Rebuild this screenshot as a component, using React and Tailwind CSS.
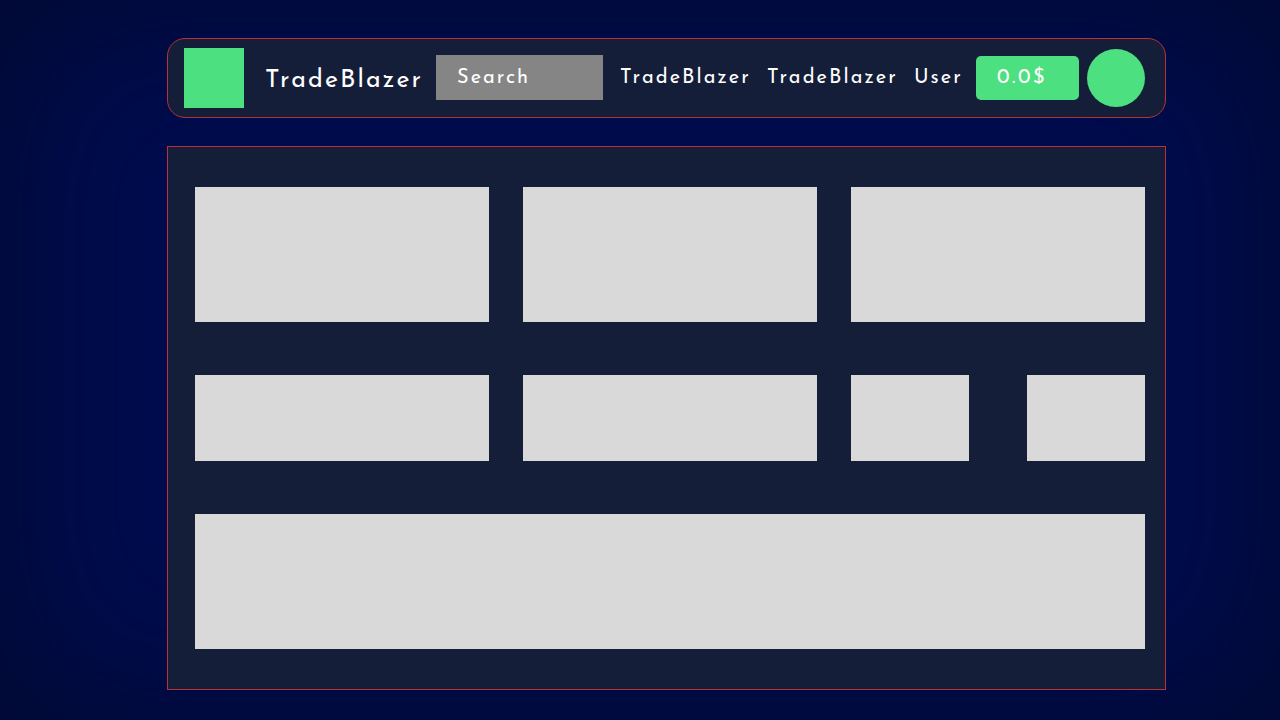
const links = ["TradeBlazer", "TradeBlazer", "User"];

function Header() {
  return (
    <header className="flex h-20 items-center rounded-[18px] border border-[#b93038] bg-[#151e38] pl-4 pr-5 tracking-[0.13em] text-white">
      <div className="size-[60px] shrink-0 bg-[#4ce080]" />
      <h1 className="w-[192px] shrink-0 pl-[21px] pt-1.5 text-[25px]">TradeBlazer</h1>
      <input
        type="search"
        aria-label="Search"
        placeholder="Search"
        className="mb-px h-[45px] w-[167px] min-w-0 rounded-none bg-[#858585] pl-[21px] text-xl tracking-widest text-white outline-none placeholder:text-white placeholder:opacity-100"
      />
      <nav className="flex flex-1 gap-4 pl-[17px] text-xl">
        {links.map((label, i) => (
          <a key={i} href="#">
            {label}
          </a>
        ))}
      </nav>
      <button
        type="button"
        className="h-11 w-[103px] shrink-0 rounded-[5px] bg-[#4ce080] pl-[21px] text-left text-xl tracking-[0.13em]"
      >
        0.0$
      </button>
      <button
        type="button"
        aria-label="Account"
        className="ml-2 size-[58px] shrink-0 rounded-full bg-[#4ce080]"
      />
    </header>
  );
}

function Tile({ className }) {
  return <div className={"bg-[#d9d9d9] " + className} />;
}

export default function App() {
  return (
    <div className="min-h-screen bg-[#000c4f] pb-[30px] pl-[167px] pr-[114px] pt-[38px] font-['Josefin_Sans','Lato',sans-serif] font-normal shadow-[inset_0_0_180px_#000a2d]">
      <Header />
      <main className="mt-7 flex flex-col gap-[53px] border border-[#b93038] bg-[#151e38] pb-10 pl-[27px] pr-5 pt-10">
        <section className="grid grid-cols-3 gap-[34px]">
          <Tile className="h-[135px]" />
          <Tile className="h-[135px]" />
          <Tile className="h-[135px]" />
        </section>
        <section className="grid grid-cols-3 gap-[34px]">
          <Tile className="h-[86px]" />
          <Tile className="h-[86px]" />
          <div className="grid grid-cols-2 gap-[58px]">
            <Tile className="h-[86px]" />
            <Tile className="h-[86px]" />
          </div>
        </section>
        <Tile className="h-[135px]" />
      </main>
    </div>
  );
}
